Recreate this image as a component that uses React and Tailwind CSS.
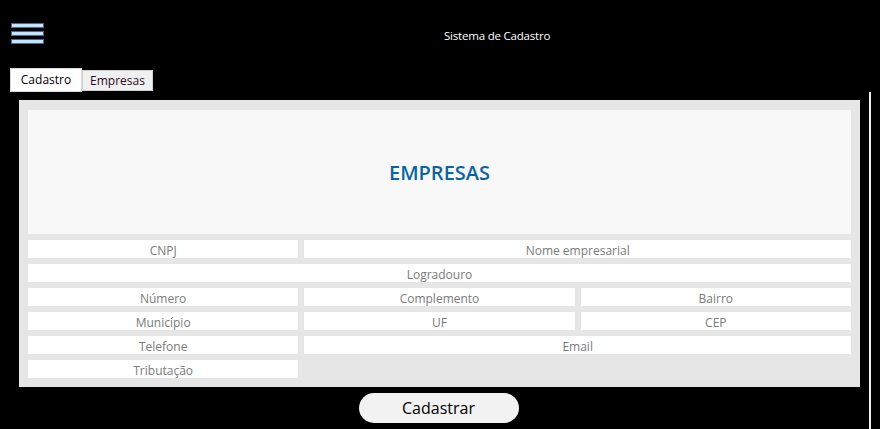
import React from "react";

const Campo = ({ label, span = "" }) => (
  <input
    type="text"
    placeholder={label}
    className={`h-[18px] w-full bg-white pt-[2px] text-center text-[12px] leading-[16px] text-[#777] placeholder:text-[#7a7a7a] outline-none ${span}`}
  />
);

const App = () => {
  return (
    <div
      className="min-h-[429px] bg-black"
      style={{ fontFamily: '"Open Sans", "Noto Sans", sans-serif' }}
    >
      {/* Cabeçalho */}
      <div className="flex h-[68px] items-start">
        <button className="ml-[12px] mt-[24px] flex w-[31px] flex-col gap-[5px]">
          <span className="block h-[3px] w-full bg-[#c6e2fc] ring-1 ring-[#4a6a8a]" />
          <span className="block h-[3px] w-full bg-[#c6e2fc] ring-1 ring-[#4a6a8a]" />
          <span className="block h-[3px] w-full bg-[#c6e2fc] ring-1 ring-[#4a6a8a]" />
        </button>
        <h1 className="ml-[401px] mt-[27px] text-[11.5px] leading-[18px] tracking-[-0.2px] text-white">
          Sistema de Cadastro
        </h1>
      </div>

      {/* Abas */}
      <div className="flex items-end pl-[10px]">
        <div className="flex h-[24px] w-[72px] items-center justify-center border border-[#d9d9d9] bg-white text-[12px] text-black">
          Cadastro
        </div>
        <div className="mb-[1px] flex h-[21px] w-[71px] items-center justify-center border border-[#cfcfcf] bg-[#f0f0f0] text-[12px] text-[#2a0a2a]">
          Empresas
        </div>
      </div>

      {/* Conteúdo */}
      <div className="flex">
        <div className="ml-[19px] w-[841px]">
          <div className="mt-[8px] bg-[#e6e6e6] px-[9px] pb-[9px] pt-[10px]">
            <div className="flex h-[124px] items-center justify-center bg-[#f8f8f8]">
              <h2 className="mt-[2px] text-[20px] font-semibold text-[#0b64a0]">EMPRESAS</h2>
            </div>
            <form className="mt-[6px] grid grid-cols-3 gap-[6px]">
              <Campo label="CNPJ" />
              <Campo label="Nome empresarial" span="col-span-2" />
              <Campo label="Logradouro" span="col-span-3" />
              <Campo label="Número" />
              <Campo label="Complemento" />
              <Campo label="Bairro" />
              <Campo label="Município" />
              <Campo label="UF" />
              <Campo label="CEP" />
              <Campo label="Telefone" />
              <Campo label="Email" span="col-span-2" />
              <Campo label="Tributação" />
            </form>
          </div>
          <div className="mt-[6px] flex justify-center">
            <button className="mr-[2px] h-[30px] w-[160px] rounded-full bg-[#f2f2f2] text-[16px] text-black">
              Cadastrar
            </button>
          </div>
        </div>
        <div className="ml-[9px] min-h-[337px] w-[2px] bg-[#f0f0f0]" />
      </div>
    </div>
  );
};

export default App;
